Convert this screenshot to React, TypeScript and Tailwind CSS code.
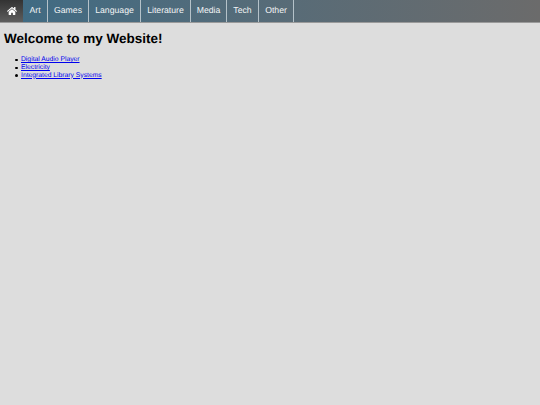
import { FaHome } from 'react-icons/fa';

const navItems = [
  { label: 'Art', width: 'w-[25px]' },
  { label: 'Games', width: 'w-[41px]' },
  { label: 'Language', width: 'w-[52px]' },
  { label: 'Literature', width: 'w-[50px]' },
  { label: 'Media', width: 'w-[36px]' },
  { label: 'Tech', width: 'w-[32px]' },
  { label: 'Other', width: 'w-[35px]' },
];

const links = ['Digital Audio Player', 'Electricity', 'Integrated Library Systems'];

export default function App() {
  return (
    <div className="min-h-[405px] bg-[#dddddd] font-['Liberation_Sans',Arial,sans-serif] text-black [text-rendering:geometricPrecision]">
      {/* Nav */}
      <nav className="flex h-[23px] items-stretch border-b border-[#9a9a9a] bg-gradient-to-r from-[#3e6b84] to-[#6b6b6b]">
        <a className="flex w-[23px] items-center justify-center bg-gradient-to-b from-[#333333] to-[#5e5e5e] text-white">
          <FaHome className="h-[10px] w-[10px]" />
        </a>
        {navItems.map((item) => (
          <a
            key={item.label}
            className={`flex items-center justify-center border-r border-[#b5c2c9] text-[8.7px] text-[#f2f4f5] ${item.width}`}
          >
            {item.label}
          </a>
        ))}
      </nav>

      <div className="px-1">
        <h1 className="mt-[7px] text-[13.5px] leading-[18px] font-bold">Welcome to my Website!</h1>
        <ul className="mt-[8px] pl-[11px] text-[6.75px] leading-[7.5px]">
          {links.map((link, i) => (
            <li key={link} className={`flex items-center gap-[3.5px] ${i === 1 ? 'mt-[0.5px]' : ''}`}>
              <span className="h-[2.5px] w-[2.5px] rounded-full bg-black" />
              <a className="text-[#0000ee] underline">{link}</a>
            </li>
          ))}
        </ul>
      </div>
    </div>
  );
}
